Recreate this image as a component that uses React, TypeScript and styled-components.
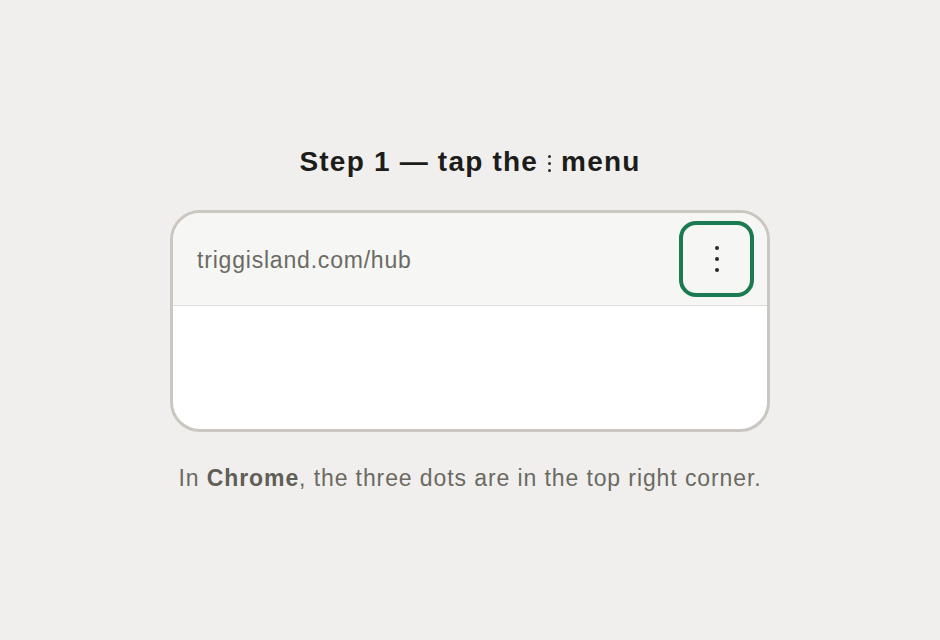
import React from "react";
import styled, { createGlobalStyle } from "styled-components";

const GlobalStyle = createGlobalStyle`
  html, body {
    margin: 0;
    padding: 0;
    background: #f0efed;
  }
  body {
    font-family: "Liberation Sans", Arial, sans-serif;
  }
`;

const Page = styled.div`
  min-height: 100vh;
  box-sizing: border-box;
  padding-bottom: 3px;
  display: flex;
  flex-direction: column;
  align-items: center;
  justify-content: center;
`;

const Title = styled.h1`
  margin: 0 0 32px;
  font-size: 28px;
  line-height: 32px;
  font-weight: 700;
  letter-spacing: 1.2px;
  color: #1c1c1a;
  display: flex;
  align-items: center;
  gap: 8px;
`;

const Kebab = styled.span`
  display: inline-flex;
  flex-direction: column;
  gap: 4px;
  padding: 0 2px;
  margin-top: 3px;
`;

const Dot = styled.span<{ $size: number }>`
  width: ${(p) => p.$size}px;
  height: ${(p) => p.$size}px;
  border-radius: 50%;
  background: #2a2a28;
`;

const Browser = styled.div`
  width: 600px;
  box-sizing: border-box;
  border: 3px solid #cac7c0;
  border-radius: 30px;
  overflow: hidden;
  background: #ffffff;
`;

const AddressBar = styled.div`
  display: flex;
  align-items: center;
  justify-content: space-between;
  padding: 8px 13px 8px 24px;
  background: #f6f6f4;
  border-bottom: 1px solid #dedcd8;
`;

const Url = styled.span`
  margin-top: 3px;
  font-size: 23px;
  letter-spacing: 0.8px;
  color: #6b6a64;
`;

const MenuButton = styled.div`
  width: 75px;
  height: 76px;
  box-sizing: border-box;
  border: 4px solid #1b7a50;
  border-radius: 17px;
  display: flex;
  flex-direction: column;
  align-items: center;
  justify-content: center;
  gap: 7px;
`;

const Body = styled.div`
  height: 123px;
`;

const Caption = styled.p`
  margin: 32px 0 0;
  font-size: 23px;
  line-height: 28px;
  letter-spacing: 0.9px;
  color: #6b6a62;

  b {
    color: #5f5e57;
  }
`;

export default function App() {
  return (
    <Page>
      <GlobalStyle />
      <Title>
        Step 1 — tap the
        <Kebab>
          <Dot $size={3} />
          <Dot $size={3} />
          <Dot $size={3} />
        </Kebab>
        menu
      </Title>
      <Browser>
        <AddressBar>
          <Url>triggisland.com/hub</Url>
          <MenuButton>
            <Dot $size={4} />
            <Dot $size={4} />
            <Dot $size={4} />
          </MenuButton>
        </AddressBar>
        <Body />
      </Browser>
      <Caption>
        In <b>Chrome</b>, the three dots are in the top right corner.
      </Caption>
    </Page>
  );
}
